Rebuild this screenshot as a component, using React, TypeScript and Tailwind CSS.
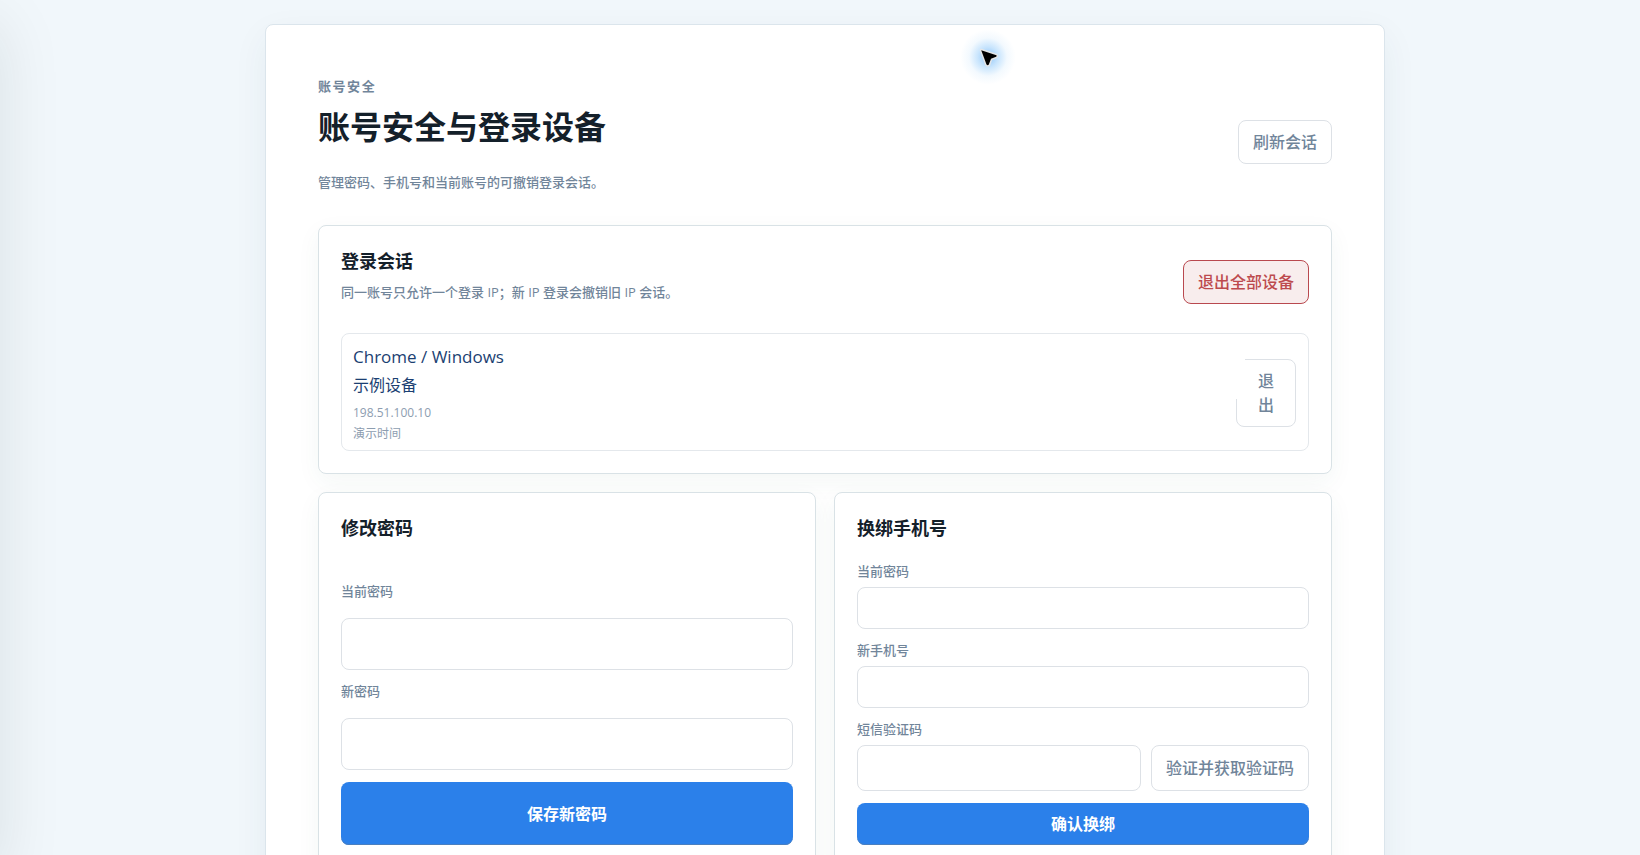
import type { ReactNode } from "react";

const ghostButton =
  "rounded-lg border border-[#dde1e6] bg-white px-[14px] py-[9px] text-base leading-6 font-medium text-[#71859a]";
const primaryButton =
  "rounded-lg bg-[#2b80ea] text-base leading-6 font-bold text-white shadow-[inset_0_-1px_0_#4a7fbf]";
const field =
  "w-full min-w-0 rounded-lg border border-[#dde1e6] bg-white px-3 text-base text-[#10202b] outline-none";
const labelText = "text-[13px] leading-[18px] font-medium text-[#71859a]";

function Panel({ children }: { children: ReactNode }) {
  return (
    <section className="rounded-lg border border-[#d9e2e6] bg-white p-[22px] shadow-[0_8px_24px_rgba(30,90,70,0.05)]">
      {children}
    </section>
  );
}

function PanelTitle({ children }: { children: ReactNode }) {
  return <h2 className="text-lg leading-[27px] font-bold text-[#14202a]">{children}</h2>;
}

function Pointer() {
  return (
    <div
      aria-hidden="true"
      className="pointer-events-none absolute top-[29px] left-[960px] flex size-[56px] items-center justify-center rounded-full bg-[radial-gradient(circle,rgba(80,165,245,0.65)_0%,rgba(120,190,250,0.4)_26%,rgba(170,215,250,0.14)_48%,rgba(255,255,255,0)_70%)]"
    >
      <svg width="22" height="22" viewBox="0 0 22 22">
        <path
          d="M4.2 4.2 L19.4 9.2 Q20.2 10 19.1 10.8 L14 12.8 L11.8 18.6 Q10.6 19.8 9.5 18.4 Z"
          fill="#000"
          stroke="#e4e6e8"
          strokeWidth="3"
          strokeLinejoin="round"
          style={{ paintOrder: "stroke" }}
        />
      </svg>
    </div>
  );
}

export default function App() {
  return (
    <div className="relative h-screen overflow-x-hidden overflow-y-auto bg-[#f1f7fb] font-['Open_Sans','Noto_Sans_CJK_SC',sans-serif] text-[#14202a] [scrollbar-width:none]">
      <aside
        aria-hidden="true"
        className="fixed inset-y-0 left-0 w-64 -translate-x-full shadow-[0_24px_60px_rgba(20,25,30,0.1)]"
      />
      <div className="py-6 pr-4 pl-[26px]">
        <main className="mx-auto flex max-w-[1120px] flex-col gap-[18px] rounded-lg border border-[#dbe5ec] bg-white p-[52px] shadow-[0_12px_36px_rgba(30,70,90,0.06)]">
          <header className="flex items-center justify-between gap-6">
            <div className="pb-4">
              <p className="text-[13px] leading-[18px] font-bold tracking-[0.12em] text-[#71859a]">账号安全</p>
              <h1 className="mt-3 text-[32px] leading-10 font-bold">账号安全与登录设备</h1>
              <p className="mt-[26px] text-[13px] leading-[18px] font-medium text-[#71859a]">
                管理密码、手机号和当前账号的可撤销登录会话。
              </p>
            </div>
            <button type="button" className={ghostButton}>
              刷新会话
            </button>
          </header>

          <Panel>
            <div className="flex items-center justify-between gap-6">
              <div className="pb-[14px]">
                <PanelTitle>登录会话</PanelTitle>
                <p className="mt-2 text-[13px] leading-[18px] font-medium text-[#71859a]">
                  同一账号只允许一个登录 IP；新 IP 登录会撤销旧 IP 会话。
                </p>
              </div>
              <button
                type="button"
                className="rounded-lg border border-[#b9494f] bg-[#f8eded] px-[14px] py-[9px] text-base leading-6 font-medium text-[#bd4a4e]"
              >
                退出全部设备
              </button>
            </div>
            <div className="mt-[18px] flex items-center justify-between rounded-lg border border-[#e4e8ec] pt-2 pr-3 pb-[6px] pl-[11px]">
              <div>
                <p className="text-[17px] leading-[29px] text-[#1b3f72]">Chrome / Windows</p>
                <p className="text-base leading-[29px] text-[#1b3f72]">示例设备</p>
                <p className="mt-0.5 text-xs leading-[21px] text-[#8d9db0]">198.51.100.10</p>
                <p className="text-xs leading-[21px] text-[#8d9db0]">演示时间</p>
              </div>
              <button
                type="button"
                className="relative w-[60px] rounded-lg border border-[#dde1e6] bg-white px-[14px] py-[9px] text-base leading-6 font-medium text-[#71859a] before:absolute before:-top-px before:-left-px before:h-10 before:w-[9px] before:bg-white"
              >
                退出
              </button>
            </div>
          </Panel>

          <div className="grid grid-cols-2 gap-[18px]">
            <Panel>
              <PanelTitle>修改密码</PanelTitle>
              <form className="mt-10 flex flex-col gap-3">
                <div className="flex flex-col gap-[18px]">
                  <label htmlFor="pw-current" className={labelText}>
                    当前密码
                  </label>
                  <input id="pw-current" type="password" className={`${field} h-[52px]`} />
                </div>
                <div className="flex flex-col gap-[18px]">
                  <label htmlFor="pw-new" className={labelText}>
                    新密码
                  </label>
                  <input id="pw-new" type="password" className={`${field} h-[52px]`} />
                </div>
                <button type="button" className={`${primaryButton} h-[63px]`}>
                  保存新密码
                </button>
              </form>
            </Panel>

            <Panel>
              <PanelTitle>换绑手机号</PanelTitle>
              <form className="mt-5 flex flex-col gap-3">
                <div className="flex flex-col gap-[7px]">
                  <label htmlFor="phone-pw" className={labelText}>
                    当前密码
                  </label>
                  <input id="phone-pw" type="password" className={`${field} h-[42px]`} />
                </div>
                <div className="flex flex-col gap-[7px]">
                  <label htmlFor="phone-new" className={labelText}>
                    新手机号
                  </label>
                  <input id="phone-new" type="tel" className={`${field} h-[42px]`} />
                </div>
                <div className="flex flex-col gap-[7px]">
                  <label htmlFor="phone-code" className={labelText}>
                    短信验证码
                  </label>
                  <div className="flex h-[46px] gap-[10px]">
                    <input id="phone-code" type="text" className={`${field} flex-1`} />
                    <button type="button" className={`${ghostButton} shrink-0`}>
                      验证并获取验证码
                    </button>
                  </div>
                </div>
                <button type="button" className={`${primaryButton} h-[42px]`}>
                  确认换绑
                </button>
              </form>
            </Panel>
          </div>
        </main>
      </div>
      <Pointer />
    </div>
  );
}
